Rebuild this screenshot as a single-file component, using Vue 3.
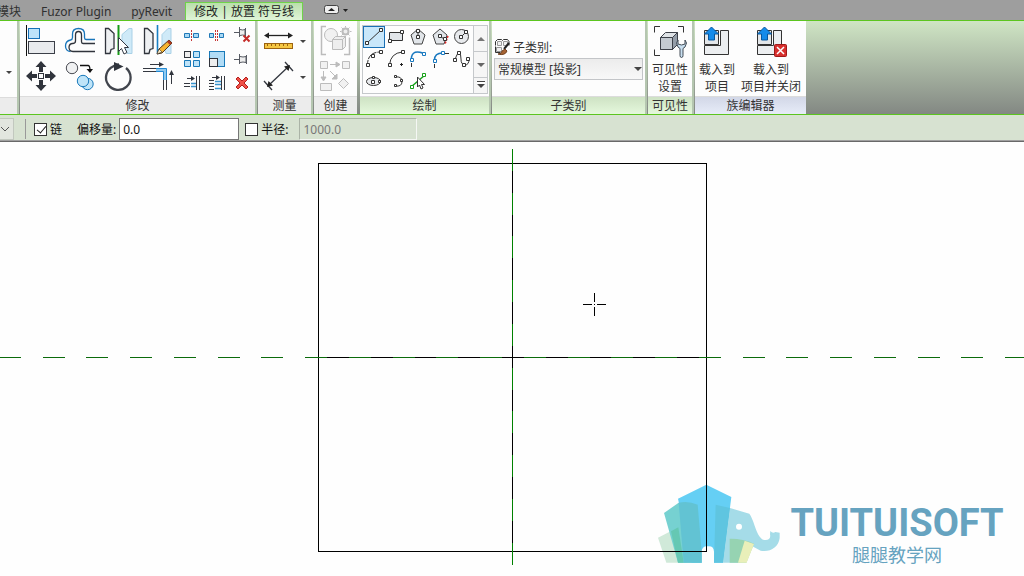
<script setup>
import { ref } from 'vue'

const chain = ref(true)
const useRadius = ref(false)
const offset = ref('0.0')
const radius = ref('1000.0')
const subcategory = ref('常规模型 [投影]')

const horizontal = Array.from({ length: 24 }, (_, i) => Math.ceil(-1.5 + i * 43.75))
const vertical = Array.from({ length: 10 }, (_, i) => Math.ceil(148.5 + i * 43.75))
</script>

<template>
  <div class="app">
    <nav class="tabs">
      <a class="tab first" href="#">模块</a>
      <a class="tab" href="#">Fuzor Plugin</a>
      <a class="tab" href="#">pyRevit</a>
      <a class="tab active" href="#">修改 | 放置 符号线</a>
      <button class="collapse" aria-label="最小化功能区">
        <svg width="26" height="10" viewBox="0 0 26 10">
          <rect x=".5" y=".5" width="14" height="8" rx="2" fill="#eee" stroke="#444" />
          <path d="M4 6L7.500 3L11 6Z" fill="#222" />
          <path d="M19 4h5l-2.500 3Z" fill="#222" />
        </svg>
      </button>
    </nav>

    <div class="ribbon">
      <section class="panel stub">
        <div class="body"><button class="more" aria-label="更多"><i class="tri"></i></button></div>
        <h2></h2>
      </section>

      <section class="panel modify">
        <div class="body">
          <div class="big">
            <button aria-label="对齐"><svg viewBox="21 22 39 36">
              <path d="M26.500 25v31" stroke="#111" />
              <rect x="28.500" y="28.500" width="11" height="10" fill="#bde3fa" stroke="#1670b8" />
              <rect x="28.500" y="41.500" width="26" height="12" fill="#e9ebee" stroke="#3b3f48" />
            </svg></button>
            <button aria-label="偏移"><svg viewBox="60 22 39 36" fill="none">
              <path d="M95 39.500H86q-1.500 0-1.500-2V34q0-5.500-6-5.500T72.500 34v3.500q0 2-2 2.500Q65.500 41 65.500 46t5 5.500" stroke="#1976bb" stroke-width="1.300" />
              <path d="M95 43.500H83q-1.500 0-1.500-2V35q0-3.500-3-3.500t-3 3.500v6q0 2.500-3 2.500t-3.500 3.500q0 4.500 4 4.500H95" stroke="#30343c" stroke-width="1.300" />
            </svg></button>
            <button aria-label="镜像 - 拾取轴"><svg viewBox="99 22 39 36">
              <path d="M105.500 28.500h3l5.500 5v15l-3 1-1 4h-4.500Z" fill="#eef0f2" stroke="#30343c" stroke-width="1.300" />
              <path d="M132 28.500h-3l-7 6v13l3 2 2 4h5Z" fill="#cfeaf8" stroke="#a9d1e7" />
              <path d="M118.500 25v30" stroke="#169b17" stroke-width="2" />
              <path d="M118.500 37.500v14l3-3 2.500 5.500 3-1.500-2.500-5h4Z" fill="#fff" stroke="#333944" />
            </svg></button>
            <button aria-label="镜像 - 绘制轴"><svg viewBox="138 22 39 36">
              <path d="M144.500 28.500h3l5.500 5v15l-3 1-1 4h-4.500Z" fill="#eef0f2" stroke="#30343c" stroke-width="1.300" />
              <path d="M171 28.500h-3l-6 6v15l3 1 1 3h5Z" fill="#cfeaf8" stroke="#a9d1e7" />
              <path d="M157.500 25v28" stroke="#197fc4" stroke-width="1.600" />
              <path d="M157 54l2-5 10-9 3 3-10 10Z" fill="#f6b431" stroke="#51391f" />
              <path d="M169 40l3 3-2 2-3-3Z" fill="#af3b20" /><path d="M157 54l2-5 3 3Z" fill="#fff0cc" stroke="#333" stroke-width=".6" />
            </svg></button>
            <button aria-label="移动"><svg viewBox="21 58 39 36" fill="#30343c">
              <path d="M41 61l5.500 6H43v5h-4v-5h-3.500ZM41 91l5.500-6H43v-5h-4v5h-3.500ZM26 76l6-5.500V74h5v4h-5v3.500ZM56 76l-6-5.500V74h-5v4h5v3.500Z" />
              <rect x="38.500" y="73.500" width="5" height="5" fill="#fff" stroke="#30343c" />
            </svg></button>
            <button aria-label="复制"><svg viewBox="60 58 39 36">
              <circle cx="72" cy="68" r="5.700" fill="#f0f1f2" stroke="#4b4d54" />
              <path d="M80 65.500h8q2 0 2 5" fill="none" stroke="#111" stroke-width="1.300" /><path d="M86.500 69h6.500l-3 4Z" fill="#111" />
              <circle cx="87.500" cy="84" r="5.700" fill="#bfe4f8" stroke="#1879bb" />
              <circle cx="83" cy="81" r="5.700" fill="#bfe4f8" stroke="#1879bb" />
            </svg></button>
            <button aria-label="旋转"><svg viewBox="99 58 39 36">
              <path d="M126 68a12.300 12.300 0 1 1-13-1.500q3-2 6-2" fill="none" stroke="#41454d" stroke-width="2.300" />
              <path d="M114 62l9.500 4.500L114 71Z" fill="#30343c" />
            </svg></button>
            <button aria-label="修剪"><svg viewBox="138 58 39 36" fill="none">
              <path d="M143 68.500h13M143 71.500h13M163.500 78v12M166.500 78v12M150 64.500h11M171.500 84V73" stroke="#343840" />
              <path d="M159 62l5 2.500-5 2.500ZM169 75l2.500-5 2.500 5Z" fill="#30343c" />
              <path d="M156 70h9v10" stroke="#8dc9f1" stroke-width="3" />
              <path d="M156 68.500h10.500V80M156 71.500h7.500V80" stroke="#238ad3" />
            </svg></button>
          </div>
          <div class="small">
            <button aria-label="拆分图元"><svg viewBox="179 23 25 24">
              <path d="M184.500 33.500h5v4h-5ZM193.500 33.500h5v4h-5Z" fill="#a9d9f5" stroke="#2079b7" />
              <path d="M191.500 30v12" stroke="#c53535" stroke-dasharray="2 1" />
            </svg></button>
            <button aria-label="用间隙拆分"><svg viewBox="204 23 25 24">
              <path d="M209.500 33.500h4v4h-4ZM219.500 33.500h4v4h-4Z" fill="#a9d9f5" stroke="#2079b7" />
              <path d="M215.500 30v12M217.500 30v12" stroke="#c53535" stroke-dasharray="2 1" />
            </svg></button>
            <button aria-label="解锁"><svg viewBox="229 23 25 24">
              <path d="M234 32.500h5M239.500 27v10M240 29.500q3 1 5 0v6q-2-1-5 0M245.500 28v9" fill="#eee" stroke="#575b63" />
              <path d="M243.500 35.500l6 6M249.500 35.500l-6 6" stroke="#c52c28" stroke-width="2" />
            </svg></button>
            <button aria-label="阵列"><svg viewBox="179 47 25 24">
              <rect x="184.500" y="51.500" width="6" height="6" fill="#eee" stroke="#30343c" />
              <path d="M193.500 51.500h6v6h-6ZM184.500 60.500h6v6h-6ZM193.500 60.500h6v6h-6Z" fill="#bfe3f8" stroke="#1879b8" />
            </svg></button>
            <button aria-label="缩放"><svg viewBox="204 47 25 24">
              <rect x="209.500" y="51.500" width="15" height="15" fill="#b1dcf6" stroke="#1879b8" />
              <rect x="209.500" y="58.500" width="8" height="8" fill="#eee" stroke="#30343c" />
            </svg></button>
            <button aria-label="锁定"><svg viewBox="229 47 25 24">
              <path d="M234 59.500h5M239.500 54v10M240 56.500q3 1 6 0v6q-3-1-6 0M246.500 55v9" fill="#eee" stroke="#575b63" />
            </svg></button>
            <button aria-label="修剪单个图元"><svg viewBox="179 71 25 24" fill="none">
              <path d="M184 83.500h6M184 86.500h6M196.500 76v14M199.500 76v14M187 78.500h6" stroke="#343840" />
              <path d="M191 83.500h5M191 86.500h5" stroke="#3994cf" stroke-width="1.500" /><path d="M191 76l4 2.500-4 2.500Z" fill="#30343c" />
            </svg></button>
            <button aria-label="修剪多个图元"><svg viewBox="204 71 25 24" fill="none">
              <path d="M209 80.500h5M209 83.500h5M209 86.500h5M209 89.500h5M221.500 76v14M224.500 76v14M212 77.500h5" stroke="#343840" />
              <path d="M215 81.500h6M215 84.500h6M215 88.500h6" stroke="#3994cf" stroke-width="1.500" /><path d="M216 75l4 2.500-4 2.500Z" fill="#30343c" />
            </svg></button>
            <button aria-label="删除"><svg viewBox="229 71 25 24">
              <path d="M236 79l2-2 4 4 4-4 2 2-4 4 4 4-2 2-4-4-4 4-2-2 4-4Z" fill="#ef5148" stroke="#b51f1c" />
            </svg></button>
          </div>
        </div>
        <h2>修改</h2>
      </section>

      <section class="panel measure">
        <div class="body pairs">
          <button aria-label="测量"><svg viewBox="262 23 36 36">
            <path d="M267 35.500h23" stroke="#222" stroke-width="1.300" /><path d="M264 35.500l5-3v6ZM293 35.500l-5-3v6Z" fill="#222" />
            <rect x="264.500" y="43.500" width="28" height="5" fill="#f5c642" stroke="#9c6310" />
            <path d="M267.500 44v2M271.500 44v2M275.500 44v2M279.500 44v2M283.500 44v2M287.500 44v2" stroke="#9c6310" />
          </svg></button><button class="more" aria-label="测量选项"><i class="tri"></i></button>
          <button aria-label="尺寸标注"><svg viewBox="262 59 36 36">
            <path d="M269 85l19-18M264 81l8 9M285 62l8 9" stroke="#343840" stroke-width="1.300" />
            <path d="M267 87l1.500-6 4.500 4.500ZM290 65l-6 1.500 4.500 4.500Z" fill="#222" />
          </svg></button><button class="more" aria-label="尺寸标注选项"><i class="tri"></i></button>
        </div>
        <h2>测量</h2>
      </section>

      <section class="panel create">
        <div class="body column">
          <button aria-label="创建组" disabled><svg viewBox="314 22 42 36" fill="none" stroke="#bcbcbc">
            <path d="M325 26.500h-4.500v28h4.500M343 54.500h5.500v-17" stroke-width="1.500" />
            <circle cx="330" cy="35" r="6.500" fill="#f1f1f1" />
            <path d="M331.500 39.500l3-3h10v10l-3 3h-10Z" fill="#eee" /><path d="M331.500 39.500h10v10M341.500 39.500l3-3" />
            <circle cx="344.500" cy="31.500" r="3" fill="#eee" stroke-width="2" />
            <path d="M344.500 26v1.500M344.500 36v1.500M339 31.500h1.500M349 31.500h1.500M340.500 27.500l1.500 1.500M347 34l1.500 1.500M348.500 27.500L347 29M342 34l-1.500 1.500" />
          </svg></button>
          <button aria-label="创建类似" disabled><svg viewBox="314 58 42 36" fill="#f1f1f1" stroke="#bcbcbc">
            <path d="M319.500 61.500h7v7h-7ZM341.500 61.500h7v7h-7ZM319.500 83.500h11v7h-11ZM342.500 78.500l5 5-5 5-5-5Z" />
            <path d="M329 64.500h9M322.500 71v8M329 71l6 6" /><path d="M335 62l4 2.500-4 2.500ZM320 77l2.500 4 2.500-4ZM336 74v5h-5Z" fill="#bcbcbc" />
          </svg></button>
        </div>
        <h2>创建</h2>
      </section>

      <section class="panel green draw">
        <div class="body">
          <div class="gallery">
            <div class="tools">
              <button class="picked" aria-label="线"><svg viewBox="363 26 22 22"><path d="M367 43l14-13" stroke="#333" /><path d="M365.500 41.500h3v3h-3ZM379.500 28.500h3v3h-3Z" fill="#fff" stroke="#333" /></svg></button>
              <button aria-label="矩形"><svg viewBox="385 26 22 22"><path d="M389.500 32.500h13v8h-13Z" fill="#e1e5e9" stroke="#333" /><path d="M388.500 39.500h3v3h-3ZM400.500 30.500h3v3h-3Z" fill="#fff" stroke="#333" /></svg></button>
              <button aria-label="内接多边形"><svg viewBox="407 26 22 22"><path d="M418 29l7 6-3 9h-8l-3-9Z" fill="#e1e5e9" stroke="#444" /><path d="M418 31v5" stroke="#333" /><path d="M416.500 29.500h3v3h-3ZM416.500 35.500h3v3h-3Z" fill="#fff" stroke="#333" /></svg></button>
              <button aria-label="外接多边形"><svg viewBox="429 26 22 22"><path d="M440 29l7 6-3 9h-8l-3-9Z" fill="#e1e5e9" stroke="#444" /><path d="M448 36l-3 8" stroke="#e22828" stroke-width="1.500" stroke-dasharray="2 1" /><path d="M440 36l4 3" stroke="#333" /><path d="M438.500 34.500h3v3h-3ZM443.500 37.500h3v3h-3Z" fill="#fff" stroke="#333" /></svg></button>
              <button aria-label="圆形"><svg viewBox="451 26 22 22"><circle cx="461.500" cy="36.500" r="7" fill="#e8eaed" stroke="#444" /><path d="M461 37l4-4" stroke="#333" /><path d="M459.500 35.500h3v3h-3ZM464.500 30.500h3v3h-3Z" fill="#fff" stroke="#333" /></svg></button>
              <button aria-label="起点终点半径弧"><svg viewBox="363 48 22 22"><path d="M367.500 65q0-13 13-13" fill="none" stroke="#333" stroke-dasharray="5 1" /><path d="M366.500 63.500h3v3h-3ZM371.500 54.500h3v3h-3ZM379.500 50.500h3v3h-3Z" fill="#fff" stroke="#333" /></svg></button>
              <button aria-label="圆心端点弧"><svg viewBox="385 48 22 22"><path d="M389.500 65q1-12 13-13" fill="none" stroke="#333" /><path d="M388.500 63.500h3v3h-3ZM401.500 50.500h3v3h-3Z" fill="#fff" stroke="#333" /><path d="M400 64.500h3M401.500 63v3" stroke="#222" /></svg></button>
              <button aria-label="相切端点弧"><svg viewBox="407 48 22 22"><path d="M411.500 59v-2q1-5 6-5t7 3" fill="none" stroke="#1979c0" stroke-width="1.500" /><path d="M411.500 63v4" stroke="#333" /><path d="M410.500 58.500h3v3h-3ZM422.500 52.500h3v3h-3Z" fill="#fff" stroke="#1979c0" /></svg></button>
              <button aria-label="圆角弧"><svg viewBox="429 48 22 22"><path d="M434.500 60q0-7 8-7" fill="none" stroke="#1979c0" stroke-width="1.500" /><path d="M434.500 64v4M445 53.500h4" stroke="#333" /><path d="M433.500 59.500h3v3h-3ZM441.500 51.500h3v3h-3Z" fill="#fff" stroke="#1979c0" /></svg></button>
              <button aria-label="样条曲线"><svg viewBox="451 48 22 22"><path d="M455 60q2-7 4-7t2 6 4 6 4-6" fill="none" stroke="#333" /><path d="M453.500 58.500h3v3h-3ZM457.500 51.500h3v3h-3ZM462.500 63.500h3v3h-3ZM466.500 57.500h3v3h-3Z" fill="#fff" stroke="#333" /></svg></button>
              <button aria-label="椭圆"><svg viewBox="363 70 22 22"><ellipse cx="373.500" cy="81.500" rx="7" ry="4" fill="#e8eaed" stroke="#333" /><path d="M371.500 80.500h3v3h-3ZM372.500 76.500h2v2h-2ZM378.500 80.500h2v2h-2Z" fill="#fff" stroke="#333" /></svg></button>
              <button aria-label="半椭圆"><svg viewBox="385 70 22 22"><path d="M395 77q7-1 7 4.500t-7 4.500" fill="none" stroke="#333" /><path d="M394.500 75.500h2v2h-2ZM394.500 84.500h2v2h-2ZM400.500 79.500h2v2h-2Z" fill="#fff" stroke="#333" /></svg></button>
              <button aria-label="拾取线"><svg viewBox="407 70 22 22"><path d="M411 87l14-12" stroke="#16a119" stroke-width="1.500" /><path d="M410.500 85.500h3v3h-3ZM422.500 73.500h3v3h-3Z" fill="#fff" stroke="#16a119" /><path d="M417.500 77v10l2-2 1.500 4 2-1-1.500-3.500h3Z" fill="#fff" stroke="#333" /></svg></button>
            </div>
            <div class="scroll">
              <button aria-label="向上"><i class="tri up"></i></button>
              <button aria-label="向下"><i class="tri wide"></i></button>
              <button class="last" aria-label="展开"><i class="tri wide lined"></i></button>
            </div>
          </div>
        </div>
        <h2>绘制</h2>
      </section>

      <section class="panel green subcat">
        <div class="body">
          <label for="subcategory">
            <svg width="17" height="17" viewBox="494 39 17 17"><path d="M495.500 45.500v-4l2-2h4l1 1 1-1h4l1.500 2v4M495.500 46.500v6h5" fill="none" stroke="#333" /><path d="M497.500 41.500h4v4h-4ZM503.500 41.500h4v4h-4ZM496.500 47.500h5v4h-5Z" fill="#f0f0f0" stroke="#999" /><path d="M504 49l5-6" stroke="#222" stroke-width="2" /><path d="M498 54q4 0 4-3l3-2 2 2q-2 5-9 3Z" fill="#a66333" stroke="#70401e" /></svg>
            <span>子类别:</span>
          </label>
          <div class="combo">
            <select id="subcategory" v-model="subcategory"><option>常规模型 [投影]</option></select>
            <i class="tri wide"></i>
          </div>
        </div>
        <h2>子类别</h2>
      </section>

      <section class="panel green visible">
        <div class="body">
          <button class="command">
            <svg viewBox="654 24 34 36"><path d="M661 26.500h-5.500v6M679 26.500h5.500v6M661 55.500h-5.500v-6" fill="none" stroke="#333" /><path d="M661.500 37.500l5-5h12v12l-5 5h-12Z" fill="#dfe3e6" stroke="#3c4048" /><path d="M661.500 37.500h12v12h-12Z" fill="#c4cad1" stroke="#3c4048" /><path d="M673.500 37.500l5-5v12l-5 5Z" fill="#949da8" stroke="#3c4048" /><path d="M679 40l-1.500 3 1.500 4 2 1.500v7q0 2 1.500 2t1.500-2v-7l2-1.500 1.500-4-1.500-3v4l-3.500 1-3.500-1Z" fill="#c8dff0" stroke="#424b55" /></svg>
            <span>可见性<br>设置</span>
          </button>
        </div>
        <h2>可见性</h2>
      </section>

      <section class="panel blue editor">
        <div class="body">
          <button class="command">
            <svg viewBox="700 24 34 36"><path d="M704.500 30.500h14v14h-14Z" fill="#e3e6e9" stroke="#333" /><path d="M720.500 30.500h8v24h-24v-9h16Z" fill="#eceef0" stroke="#333" /><path d="M711.500 27l-7 7h4v6h6v-6h4Z" fill="#148bea" stroke="#07579e" /></svg>
            <span>载入到<br>项目</span>
          </button>
          <button class="command wide">
            <svg viewBox="753 24 34 36"><path d="M756.500 30.500h14v14h-14Z" fill="#e3e6e9" stroke="#333" /><path d="M772.500 30.500h8v24h-24v-9h16Z" fill="#eceef0" stroke="#333" /><path d="M763.500 27l-7 7h4v6h6v-6h4Z" fill="#148bea" stroke="#07579e" /><rect x="773.500" y="44.500" width="12" height="12" rx="1" fill="#d8302e" stroke="#9e1919" /><path d="M776 47l7 7M783 47l-7 7" stroke="#fff" stroke-width="1.500" /></svg>
            <span>载入到<br>项目并关闭</span>
          </button>
        </div>
        <h2>族编辑器</h2>
      </section>
    </div>

    <form class="options">
      <div class="mini">
        <select aria-label="放置平面"><option></option></select>
        <svg width="10" height="6" viewBox="0 0 10 6"><path d="M1 1l4 4 4-4" fill="none" stroke="#555" /></svg>
      </div>
      <label class="check chain"><input v-model="chain" type="checkbox"><span>链</span></label>
      <label for="offset"><span>偏移量:</span></label>
      <input id="offset" v-model="offset" class="field" type="text">
      <label class="check radius"><input v-model="useRadius" type="checkbox"><span>半径:</span></label>
      <input v-model="radius" class="field off" type="text" aria-label="半径值" disabled>
    </form>

    <main class="canvas">
      <div class="brand">
        <svg width="140" height="95" viewBox="0 0 420 285">
          <path d="M24 188L85 157 110 263H49Z" fill="#d0e9d9" />
          <path d="M42 114L85 84Q115 75 143 89L155 263H84Z" fill="#76d1d1" />
          <path d="M63 169L85 157 101 263H84Z" fill="#65c8b3" />
          <path d="M84 71L169 29 244 66 219 263H192V230Q191 214 177 214H168Q156 216 155 230V263H125Z" fill="#65cff4" />
          <path d="M86 83Q116 77 143 89L155 230V263H101Z" fill="#62c3d3" />
          <path d="M240 99L298 116C315 140 319 189 343 195C356 197 363 189 360 178L361 168Q368 176 376 171L389 173V189C386 217 359 233 332 227L282 200 270 263H219Z" fill="#a5dce8" />
          <path d="M197 89L240 99 219 263H192Z" fill="#5fc5e0" />
          <path d="M239 191Q277 190 312 206L289 263H239Z" fill="#96d3b2" />
          <path d="M284 197L312 207 290 263H264Z" fill="#e9efb9" />
          <circle cx="267" cy="155" r="9" fill="#fff" />
        </svg>
        <div class="words"><strong>TUITUISOFT</strong><span>腿腿教学网</span></div>
      </div>
      <svg class="drawing" viewBox="0 142 1024 434" shape-rendering="crispEdges">
        <path d="M318 357.500H707M512.500 163V552" stroke="#000" />
        <rect x="318.500" y="163.500" width="388" height="388" fill="none" stroke="#000" />
        <path v-for="x in horizontal" :key="'h' + x" :d="`M${x} 357.500h22`" stroke="#0b6b0b" />
        <path v-for="y in vertical" :key="'v' + y" :d="`M512.500 ${y}v22`" stroke="#008000" />
        <path d="M583 304.500h9M597 304.500h9M594.500 293v9M594.500 307v9M594 304.500h1" stroke="#000" />
      </svg>
    </main>
  </div>
</template>

<style>
body { margin: 0; overflow: hidden; }
</style>

<style scoped>
* { box-sizing: border-box; }
.app { min-height: 100vh; display: flex; flex-direction: column; background: #fefefe; color: #333; font: 12px/16px "Noto Sans", "Noto Sans CJK SC", sans-serif; }
button, input, select { font: inherit; color: inherit; margin: 0; }
button { padding: 0; border: 0; background: none; display: flex; align-items: center; justify-content: center; }
svg { display: block; flex: none; }
.tabs { height: 20px; display: flex; background: #9e9e9e; }
.tab { padding: 4px 10px 0; color: #303030; text-decoration: none; white-space: nowrap; }
.tab.first { padding-left: 0; margin-left: -3px; }
.tab.active { margin: 2px 0 0 3px; padding: 1px 8px 0; border: 1px solid #70d34a; border-bottom: 0; background: linear-gradient(#b9dfab, #e0f4d8); color: #222; }
.collapse { margin-left: 21px; }
.ribbon { height: 95px; display: flex; border: solid #5cc51f; border-width: 1px 0; background: linear-gradient(#cfe5c4, #838883); }
.panel { display: flex; flex-direction: column; background: #fdfdfd; border-right: 2px solid #b5c6b0; margin-right: 1px; }
.body { flex: 1; display: flex; }
h2 { margin: 0; height: 18px; background: #ececec; border-top: 1px solid #dcdcdc; font: inherit; line-height: 18px; text-align: center; }
.green h2 { background: linear-gradient(#cee2c4, #e5f8dc); }
.blue h2 { background: linear-gradient(#d2d7e7, #e7ecf8); }
.stub { width: 19px; }
.stub .body { padding: 26px 0 0 4px; }
.modify { width: 237px; }
.big { display: grid; grid-template: repeat(2, 36px) / repeat(4, 39px); padding: 1px 2px 0 1px; }
.big svg { width: 39px; height: 36px; }
.small { display: grid; grid-template: repeat(3, 24px) / repeat(3, 25px); padding-top: 2px; }
.small svg { width: 25px; height: 24px; }
.measure { width: 55px; }
.body.pairs { display: grid; grid-template: repeat(2, 36px) / 36px 10px; padding: 2px 0 0 4px; }
.pairs svg { width: 36px; height: 36px; }
.create { width: 43px; margin-right: 3px; border-right: 0; }
.column { flex-direction: column; padding-top: 1px; }
.column svg { width: 42px; height: 36px; }
.draw { width: 131px; }
.draw .body { padding: 4px 1px 0 2px; }
.gallery { flex: 1; height: 69px; display: flex; border: 1px solid #c5c8cb; }
.tools { flex: 1; display: grid; grid-template: repeat(3, 22px) / repeat(5, 22px); }
.tools svg { width: 22px; height: 22px; }
.tools .picked { background: #c9e7fa; outline: 1px solid #1b70b5; outline-offset: -1px; }
.scroll { width: 14px; display: flex; flex-direction: column; border-left: 1px solid #c5c8cb; background: #f6f6f6; }
.scroll button { flex: 1; border-bottom: 1px solid #c5c8cb; }
.scroll .last { flex: 0 0 15px; border: 0; }
.tri { border: 3px solid transparent; border-top-color: #444; border-bottom: 0; }
.tri.wide { border-width: 4px 4px 0; }
.scroll .tri.wide { border-top-color: #666; }
.tri.up { border: 4px solid transparent; border-bottom-color: #777; border-top: 0; }
.scroll .tri.lined { border-top-color: #444; box-shadow: 0 -2px #fff, 0 -3px #444; }
.more { width: 10px; }
.stub .more { height: 50px; }
.subcat { width: 155px; }
.subcat .body { flex-direction: column; padding: 17px 2px 0; }
.subcat label { display: flex; align-items: center; gap: 2px; height: 18px; margin-bottom: 2px; }
.subcat label span { padding-top: 2px; }
.combo { display: flex; align-items: center; height: 22px; border: 1px solid #c3c5c8; background: linear-gradient(#ececec, #f8f8f8); }
.combo select { flex: 1; min-width: 0; padding: 2px 3px 0; border: 0; background: none; appearance: none; }
.visible { width: 46px; }
.editor { width: 111px; border-right: 0; }
.command { width: 44px; flex-direction: column; justify-content: flex-start; padding-top: 3px; gap: 1px; line-height: 17px; white-space: nowrap; }
.command svg { width: 34px; height: 36px; }
.command.wide { width: 64px; }
.options { height: 27px; display: flex; align-items: center; padding: 2px 0 0; background: #d7e2d1; border-bottom: 1px solid #696969; box-shadow: inset 0 -1px #a0a0a0; color: #111; }
.options label { white-space: nowrap; }
.options label span { display: block; padding-top: 2px; }
.mini { display: flex; align-items: center; width: 14px; height: 22px; border: 1px solid #c2c8bf; border-left: 0; background: #e2e6df; margin-right: 11px; }
.mini select { width: 0; padding: 0; border: 0; appearance: none; }
.check { display: flex; align-items: center; gap: 3px; }
.check input { appearance: none; width: 13px; height: 13px; border: 1px solid #333; background: #fff; }
.check input:checked::after { content: ""; display: block; width: 4px; height: 8px; margin: 0 0 0 4px; border: solid #222; border-width: 0 1px 1px 0; transform: rotate(40deg); }
.chain { padding-left: 8px; margin-right: 15px; border-left: 1px solid #999; height: 20px; }
.field { width: 120px; height: 22px; margin: 0 6px 0 3px; padding: 0 3px; border: 1px solid #777; background: #fff; }
.field.off { width: 118px; margin-left: 11px; background: #d7e2d1; border-color: #aab3a6 #f5f7f4 #f5f7f4 #aab3a6; color: #777; }
.canvas { flex: 1; position: relative; }
.drawing { position: relative; width: 100%; }
.brand { position: absolute; right: 20px; bottom: 6px; display: flex; }
.words { width: 214px; display: flex; flex-direction: column; align-items: center; padding-top: 28px; color: #66a3c0; }
.words strong { font: 700 38px/40px Roboto, sans-serif; }
.words span { font: 18px/22px "Noto Sans CJK SC", sans-serif; }
</style>
